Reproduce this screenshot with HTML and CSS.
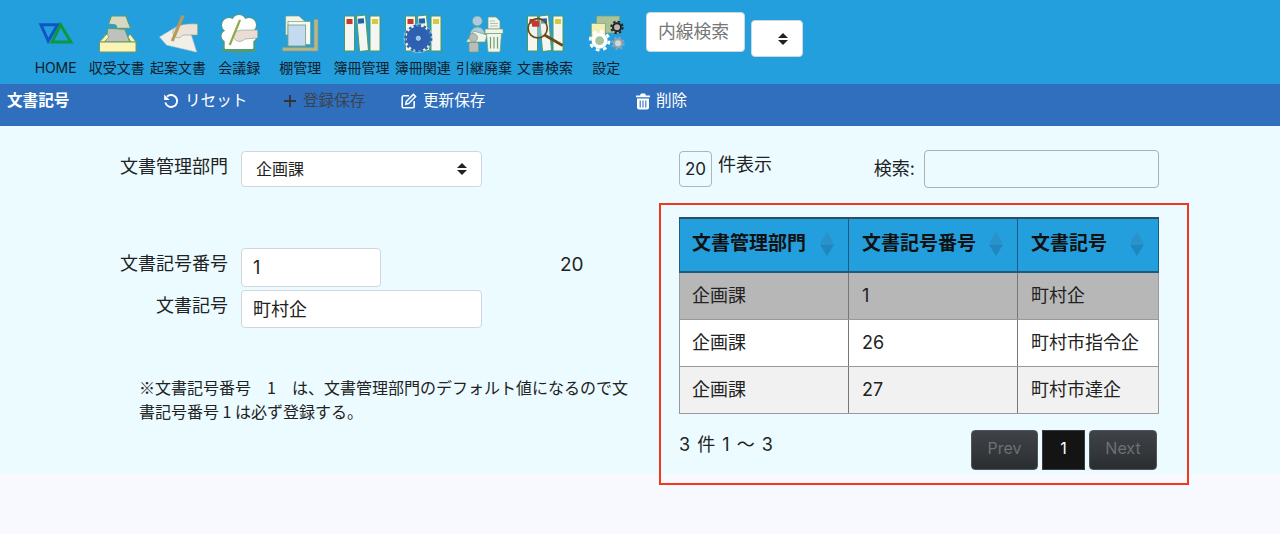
FILE: index.html
```html
<!DOCTYPE html>
<html lang="ja">
  <head>
    <meta charset="UTF-8" />
    <meta name="viewport" content="width=device-width, initial-scale=1.0" />
    <title>文書記号</title>
    <link rel="stylesheet" href="styles.css">
  </head>
  <body>
    <svg class="defs" width="0" height="0">
      <symbol id="binder" viewBox="0 0 60 44">
        <rect x="12.5" y="4" width="10" height="35" fill="#f5f6f2" stroke="#4f9a5a" stroke-width="1"/>
        <polygon points="24.5,4 33.5,3 36.5,38.5 27.5,39.5" fill="#f5f6f2" stroke="#4f9a5a" stroke-width="1"/>
        <rect x="38" y="4" width="10" height="35" fill="#f5f6f2" stroke="#4f9a5a" stroke-width="1"/>
        <rect x="14.5" y="7" width="6" height="5" fill="#c8372d"/>
        <rect x="26" y="6.5" width="6" height="5" fill="#1f63a8" transform="rotate(-5 29 9)"/>
        <rect x="40" y="7" width="6" height="5" fill="#d7c93c"/>
      </symbol>
      <symbol id="sort" viewBox="0 0 14 24">
        <polygon points="7,0 14,11.5 0,11.5" fill="#2b91c9"/>
        <polygon points="0,12.5 14,12.5 7,24" fill="#1f86be"/>
      </symbol>
      <symbol id="updown" viewBox="0 0 10 12">
        <polygon points="5,0 10,5 0,5" fill="#222"/>
        <polygon points="0,7 10,7 5,12" fill="#222"/>
      </symbol>
    </svg>

    <div class="page">
      <header class="topbar">
        <nav class="nav">
          <a class="navItem">
            <svg class="navIcon" viewBox="0 0 60 44">
              <polygon points="15,12.8 31.5,12.8 22.2,29" fill="none" stroke="#0f55c4" stroke-width="3"/>
              <polygon points="34.6,12.8 44.8,30 26,30" fill="none" stroke="#0b9a3a" stroke-width="3"/>
            </svg>
            <span class="homeLabel">HOME</span>
          </a>
          <a class="navItem">
            <svg class="navIcon" viewBox="0 0 60 44">
              <polygon points="24.5,4 38.8,4 43.5,16.3 30.1,16.3 28.8,13 21.5,12" fill="#d5d8c4" stroke="#5c9a62"/>
              <polygon points="21,16.3 37.8,17.3 42.8,30 17.8,30 16.8,23 20,22" fill="#bfc1bd" stroke="#5c9a62"/>
              <polygon points="12.5,30 20,22 22,25 17,30" fill="#fbf4b6" stroke="#6d9b64" stroke-width=".8"/>
              <polygon points="49,30 43,22 41,25 44,30" fill="#fbf4b6" stroke="#6d9b64" stroke-width=".8"/>
              <rect x="12.5" y="30" width="36.5" height="10" fill="#fbf4b6" stroke="#6d9b64"/>
            </svg>
            <span>収受文書</span>
          </a>
          <a class="navItem">
            <svg class="navIcon" viewBox="0 0 60 44">
              <polygon points="11.6,25 31.6,13 41.6,18 48.6,40 18.6,33" fill="#f1efe8" stroke="#cfd4c8" stroke-width=".6"/>
              <path d="M24.6,20 C27,14 34,11 49.6,12 L49.6,23 L35,23 C31,28 26,26 24.6,20 Z" fill="#ece2da" stroke="#7ba47a" stroke-width=".6"/>
              <line x1="35" y1="3.5" x2="24.3" y2="29" stroke="#b69a5a" stroke-width="3.2"/>
            </svg>
            <span>起案文書</span>
          </a>
          <a class="navItem">
            <svg class="navIcon" viewBox="0 0 60 44">
              <g fill="#fff" stroke="#5c9a62" stroke-width="1.4">
                <circle cx="20" cy="13" r="7"/>
                <circle cx="30" cy="10" r="7"/>
                <circle cx="40" cy="13" r="7"/>
                <circle cx="18" cy="24" r="5.5"/>
                <circle cx="42" cy="24" r="5.5"/>
                <rect x="15" y="24" width="30" height="13"/>
              </g>
              <g fill="#fff">
                <circle cx="20" cy="13" r="7"/>
                <circle cx="30" cy="10" r="7"/>
                <circle cx="40" cy="13" r="7"/>
                <circle cx="18" cy="24" r="5.5"/>
                <circle cx="42" cy="24" r="5.5"/>
                <rect x="16" y="12" width="28" height="25"/>
              </g>
              <path d="M13,37 L30,38.5 L47,37 L47,39 L30,41 L13,39 Z" fill="#5c9a62"/>
              <path d="M23.7,24 C26,19 30,18 36,18 L48.7,18 L48.7,26 L36,27 C32,31 26,30 23.7,24 Z" fill="#ecdcd6" stroke="#7ba47a" stroke-width=".6"/>
              <line x1="31" y1="8" x2="20.7" y2="33" stroke="#8fa950" stroke-width="2.2"/>
            </svg>
            <span>会議録</span>
          </a>
          <a class="navItem">
            <svg class="navIcon" viewBox="0 0 60 44">
              <polygon points="44,7.5 48,7.5 48,39 12.5,39 12.5,35.5 44,35.5" fill="#b8b48a" stroke="#8aa076" stroke-width=".6"/>
              <polygon points="15.6,4 29,4 35,9.5 35,23 15.6,23" fill="#f0f4ec" stroke="#6ea274" stroke-width=".7"/>
              <rect x="18" y="9.5" width="22.5" height="23" fill="#f6f8f2" stroke="#6ea274" stroke-width=".7"/>
              <rect x="18" y="13" width="17.6" height="21" fill="#c3daf0" stroke="#6ea274" stroke-width=".8"/>
            </svg>
            <span>棚管理</span>
          </a>
          <a class="navItem">
            <svg class="navIcon"><use href="#binder"/></svg>
            <span>簿冊管理</span>
          </a>
          <a class="navItem">
            <svg class="navIcon" viewBox="0 0 60 44">
              <use href="#binder" width="60" height="44"/>
              <circle cx="25.3" cy="26.3" r="14.3" fill="none" stroke="#cfe0ee" stroke-width=".7"/>
              <circle cx="25.3" cy="26.3" r="12.8" fill="none" stroke="#2f5fb0" stroke-width="2.6" stroke-dasharray="2.5 2.52"/>
              <circle cx="25.3" cy="26.3" r="11.8" fill="#2f5fb0"/>
              <circle cx="25.3" cy="26.3" r="2.2" fill="#8ec6ec" stroke="#cfe0ee" stroke-width=".6"/>
            </svg>
            <span>簿冊関連</span>
          </a>
          <a class="navItem">
            <svg class="navIcon" viewBox="0 0 60 44">
              <circle cx="23.3" cy="9" r="5" fill="#a9cbe4" stroke="#6ea274" stroke-width=".7"/>
              <path d="M16,24 C16,12 31,12 31,24 Z" fill="#a9cbe4" stroke="#6ea274" stroke-width=".7"/>
              <polygon points="12,30 20,19 33,23 31,30" fill="#f0f4ec" stroke="#6ea274" stroke-width=".7"/>
              <circle cx="19.3" cy="25.7" r="4.2" fill="#bbb" stroke="#6ea274" stroke-width=".7"/>
              <rect x="15" y="30.5" width="9.5" height="9.5" rx="1.5" fill="#bbb" stroke="#6ea274" stroke-width=".7"/>
              <polygon points="34,5 42,5 46,9 46,17 34,17" fill="#f2f4ee" stroke="#6ea274" stroke-width=".7"/>
              <path d="M36,9 H41 M36,11.5 H44 M36,14 H44" stroke="#9ab89c" stroke-width=".8"/>
              <rect x="31" y="17" width="18" height="4.5" fill="#f2f4ee" stroke="#6ea274" stroke-width=".7"/>
              <polygon points="32.5,21.5 47.5,21.5 46,40 34,40" fill="#f2f4ee" stroke="#6ea274" stroke-width=".7"/>
              <path d="M36.5,25 V36.5 M40,25 V36.5 M43.5,25 V36.5" stroke="#6ea274" stroke-width="1.2"/>
            </svg>
            <span>引継廃棄</span>
          </a>
          <a class="navItem">
            <svg class="navIcon" viewBox="0 0 60 44">
              <use href="#binder" width="60" height="44"/>
              <circle cx="22.7" cy="16.3" r="9.6" fill="#e8ebe4" fill-opacity=".35" stroke="#6b4a12" stroke-width="1.7"/>
              <rect x="17" y="8.7" width="7.4" height="6" fill="#c8372d"/>
              <line x1="29.5" y1="23" x2="47.7" y2="33.5" stroke="#6b4a12" stroke-width="2.6"/>
            </svg>
            <span>文書検索</span>
          </a>
          <a class="navItem">
            <svg class="navIcon" viewBox="0 0 60 44">
              <rect x="20.6" y="4" width="23" height="17" fill="#a9c29a" stroke="#6ea274" stroke-width=".7"/>
              <rect x="15.3" y="11.3" width="14" height="15" fill="#f4efb6" stroke="#6ea274" stroke-width=".7"/>
              <circle cx="41" cy="15.3" r="4" fill="#b5b5b5" stroke="#222" stroke-width="2"/>
              <circle cx="41" cy="15.3" r="5.8" fill="none" stroke="#222" stroke-width="1.8" stroke-dasharray="2.3 2.25"/>
              <circle cx="42" cy="31.3" r="4" fill="#cfd8dd" stroke="#93a4ae" stroke-width="2"/>
              <circle cx="42" cy="31.3" r="5.8" fill="none" stroke="#93a4ae" stroke-width="1.8" stroke-dasharray="2.3 2.25"/>
              <circle cx="23.6" cy="28.7" r="9.4" fill="none" stroke="#fff" stroke-width="2.8" stroke-dasharray="3.7 3.7"/>
              <circle cx="23.6" cy="28.7" r="6.2" fill="#a9c29a" stroke="#fff" stroke-width="3.6"/>
            </svg>
            <span>設定</span>
          </a>
        </nav>
        <input class="navSearch" type="text" placeholder="内線検索">
        <div class="selectWrap navSelect">
          <select class="selectBox"><option></option></select>
          <svg class="selectArrow"><use href="#updown"/></svg>
        </div>
      </header>

      <div class="actionBar">
        <div class="actionTitle">文書記号</div>
        <a class="action actionReset">
          <svg class="actionIcon" viewBox="0 0 16 16">
            <path d="M4 3.6 A6 6 0 1 1 2.3 9.5" fill="none" stroke="#fff" stroke-width="1.9"/>
            <polygon points="1.2,1.6 1.2,7 6.6,7" fill="#fff"/>
          </svg>
          リセット
        </a>
        <a class="action actionAdd">
          <svg class="actionIcon plusIcon" viewBox="0 0 14 14">
            <path d="M7 1 V13 M1 7 H13" stroke="#333" stroke-width="1.8"/>
          </svg>
          登録保存
        </a>
        <a class="action actionUpdate">
          <svg class="actionIcon" viewBox="0 0 16 16">
            <path d="M8 2.8 H2.6 A1.4 1.4 0 0 0 1.2 4.2 V13.4 A1.4 1.4 0 0 0 2.6 14.8 H11.8 A1.4 1.4 0 0 0 13.2 13.4 V8" fill="none" stroke="#fff" stroke-width="1.6"/>
            <path d="M12.4 1.4 L14.6 3.6 L7.6 10.6 L4.8 11.2 L5.4 8.4 Z" fill="none" stroke="#fff" stroke-width="1.5"/>
          </svg>
          更新保存
        </a>
        <a class="action">
          <svg class="actionIcon trashIcon" viewBox="0 0 14 17">
            <path d="M0 2.4 H14 V4.2 H0 Z M4 2.4 L5 0.6 H9 L10 2.4 Z" fill="#fff"/>
            <path d="M1 5.4 H13 V14.6 A2 2 0 0 1 11 16.6 H3 A2 2 0 0 1 1 14.6 Z" fill="#fff"/>
            <path d="M4.2 7.4 V14.4 M7 7.4 V14.4 M9.8 7.4 V14.4" stroke="#2f6fbe" stroke-width="1.1"/>
          </svg>
          削除
        </a>
      </div>

      <main class="content">
        <section class="formCol">
          <div class="formRow">
            <label class="formLabel">文書管理部門</label>
            <div class="selectWrap deptSelect">
              <select class="selectBox"><option>企画課</option></select>
              <svg class="selectArrow"><use href="#updown"/></svg>
            </div>
          </div>
          <div class="formRow numberRow">
            <label class="formLabel">文書記号番号</label>
            <input class="textInput shortInput" type="text" value="1">
            <span class="nextNumber">20</span>
          </div>
          <div class="formRow markRow">
            <label class="formLabel">文書記号</label>
            <input class="textInput markInput" type="text" value="町村企">
          </div>
          <p class="note">※文書記号番号　1　は、文書管理部門のデフォルト値になるので文書記号番号 1 は必ず登録する。</p>
        </section>

        <section class="listCol">
          <div class="listTop">
            <div class="pageSize">20</div>
            <span class="pageSizeText">件表示</span>
            <label class="searchLabel">検索:</label>
            <input class="searchInput" type="text">
          </div>
          <table class="docTable">
            <thead>
              <tr>
                <th class="col1"><div class="thInner">文書管理部門<svg class="sortIcon"><use href="#sort"/></svg></div></th>
                <th class="col2"><div class="thInner">文書記号番号<svg class="sortIcon"><use href="#sort"/></svg></div></th>
                <th><div class="thInner">文書記号<svg class="sortIcon"><use href="#sort"/></svg></div></th>
              </tr>
            </thead>
            <tbody>
              <tr class="selected"><td>企画課</td><td>1</td><td>町村企</td></tr>
              <tr><td>企画課</td><td>26</td><td>町村市指令企</td></tr>
              <tr class="even"><td>企画課</td><td>27</td><td>町村市達企</td></tr>
            </tbody>
          </table>
          <div class="listBottom">
            <div class="listInfo">3 件 1 〜 3</div>
            <div class="pager">
              <button class="pageBtn">Prev</button>
              <button class="pageBtn current">1</button>
              <button class="pageBtn">Next</button>
            </div>
          </div>
        </section>
      </main>

      <div class="highlight"></div>
    </div>
  </body>
</html>
```

FILE: styles.css
```css
* {
  margin: 0;
  padding: 0;
  box-sizing: border-box;
  font-family: Inter, "Noto Sans CJK JP", sans-serif;
}
body {
  background-color: #f8f9fe;
  color: #222;
  overflow: hidden;
}
.defs {
  position: absolute;
}
.page {
  position: relative;
  height: 534px;
}

/* top menu */
.topbar {
  background-color: #249fdd;
  height: 84px;
  display: flex;
  align-items: flex-start;
  padding-left: 25px;
}
.nav {
  display: flex;
  width: 620px;
  padding-top: 12px;
}
.navItem {
  width: 61.2px;
  display: flex;
  flex-direction: column;
  align-items: center;
  font-size: 14px;
  line-height: 20px;
  color: #10202c;
  white-space: nowrap;
}
.homeLabel {
  letter-spacing: -0.1px;
}
.navIcon {
  width: 60px;
  height: 44px;
  margin-bottom: 2px;
}
.navSearch {
  width: 99px;
  height: 40px;
  margin: 12px 0 0 1px;
  padding: 0 11px 2px;
  font-size: 17.8px;
  border: 1px solid #cfd6dc;
  border-radius: 4px;
  background-color: #fff;
}
.navSearch::placeholder {
  color: #777;
}
.navSelect {
  width: 52px;
  height: 37px;
  margin: 20px 0 0 6px;
}

.selectWrap {
  position: relative;
}
.selectBox {
  appearance: none;
  width: 100%;
  height: 100%;
  padding-left: 14px;
  font-size: 16px;
  color: #222;
  background-color: #fff;
  border: 1px solid #cfd6dc;
  border-radius: 4px;
}
.selectArrow {
  position: absolute;
  right: 15px;
  top: 50%;
  width: 10px;
  height: 12px;
  transform: translateY(-50%);
}

/* action bar */
.actionBar {
  background-color: #2f6fbe;
  height: 42px;
  display: flex;
  padding: 6px 0 0 7px;
  font-size: 15.6px;
  line-height: 22px;
  color: #fff;
}
.actionTitle {
  width: 156px;
  font-weight: bold;
}
.action {
  display: flex;
  align-items: center;
  height: 22px;
  color: #fff;
  white-space: nowrap;
}
.actionIcon {
  width: 16px;
  height: 16px;
  margin-right: 6px;
}
.plusIcon {
  width: 14px;
  height: 14px;
}
.trashIcon {
  width: 14px;
  height: 17px;
}
.actionReset {
  width: 120px;
}
.actionAdd {
  width: 118px;
  color: #3a4450;
}
.actionUpdate {
  width: 235px;
}

/* main */
.content {
  background-color: #ebfbff;
  height: 348px;
  display: flex;
}
.formCol {
  width: 679px;
  padding-top: 25px;
}
.formRow {
  display: flex;
  align-items: flex-start;
}
.formLabel {
  width: 228px;
  margin-right: 13px;
  text-align: right;
  font-size: 18px;
  line-height: 32px;
}
.deptSelect {
  width: 241px;
  height: 36px;
}
.numberRow {
  margin-top: 61px;
}
.markRow {
  margin-top: 3px;
}
.textInput {
  width: 241px;
  height: 39px;
  padding: 0 11px;
  font-size: 18px;
  color: #222;
  background-color: #fff;
  border: 1px solid #cfd6dc;
  border-radius: 4px;
}
.shortInput {
  width: 140px;
}
.markInput {
  height: 38px;
  padding-bottom: 3px;
}
.nextNumber {
  margin-left: 179px;
  padding-top: 1px;
  font-size: 19px;
  line-height: 32px;
}
.note {
  width: 490px;
  margin: 47px 0 0 139px;
  font-family: "Noto Sans CJK JP", sans-serif;
  font-size: 16px;
  line-height: 24px;
}

/* list */
.listCol {
  width: 480px;
  padding-top: 24px;
}
.listTop {
  display: flex;
  align-items: flex-start;
  height: 67px;
}
.pageSize {
  width: 33px;
  height: 36px;
  margin-top: 1px;
  text-align: center;
  font-size: 17px;
  line-height: 34px;
  border: 1px solid #aeb6b8;
  border-radius: 4px;
}
.pageSizeText {
  margin-left: 6px;
  font-size: 18px;
  line-height: 30px;
}
.searchLabel {
  margin-left: auto;
  margin-right: 9px;
  font-size: 18px;
  line-height: 38px;
}
.searchInput {
  width: 235px;
  height: 38px;
  background-color: #ebfbff;
  border: 1px solid #a9b1b3;
  border-radius: 4px;
}
.docTable {
  width: 480px;
  border-collapse: collapse;
  table-layout: fixed;
  font-size: 18px;
  line-height: 24px;
}
.docTable th {
  height: 54px;
  padding: 0 14px 2px 13px;
  text-align: left;
  font-size: 19px;
  font-weight: bold;
  color: #111;
  background-color: #249fdd;
  border-top: 2px solid #2c4f63;
  border-bottom: 2px solid #205a7a;
  border-left: 1px solid #205a7a;
  border-right: 1px solid #205a7a;
}
.docTable th.col1,
.docTable td:first-child {
  padding-left: 12px;
}
.thInner {
  display: flex;
  align-items: center;
  justify-content: space-between;
}
.col1,
.col2 {
  width: 169px;
}
.sortIcon {
  width: 14px;
  height: 24px;
  flex-shrink: 0;
}
.docTable td {
  height: 47px;
  padding: 0 13px;
  background-color: #fff;
  border: 1px solid #777;
  border-top-color: #999;
  border-bottom-color: #999;
}
.docTable td:first-child {
  border-left-color: #999;
}
.docTable td:last-child {
  border-right-color: #999;
}
.docTable .selected td {
  background-color: #b7b7b7;
}
.docTable .even td {
  background-color: #f1f1f1;
}
.listBottom {
  display: flex;
  justify-content: space-between;
  align-items: flex-start;
  margin-top: 16px;
  padding-right: 2px;
}
.listInfo {
  font-size: 18px;
  line-height: 30px;
  word-spacing: 2px;
}
.pager {
  display: flex;
  gap: 4px;
}
.pageBtn {
  width: 67px;
  height: 40px;
  padding-bottom: 3px;
  font-size: 16px;
  color: #6c7175;
  background: linear-gradient(#3f4347, #2b2e31);
  border: 1px solid #50565a;
  border-radius: 4px;
}
.pageBtn:last-child {
  width: 68px;
}
.pageBtn.current {
  width: 43px;
  color: #fff;
  background: #141414;
  border-color: #3a3d40;
  border-radius: 0;
}

/* red frame drawn over the list */
.highlight {
  position: absolute;
  left: 659px;
  top: 203px;
  width: 530px;
  height: 282px;
  border: 2px solid #f4361c;
}
```
